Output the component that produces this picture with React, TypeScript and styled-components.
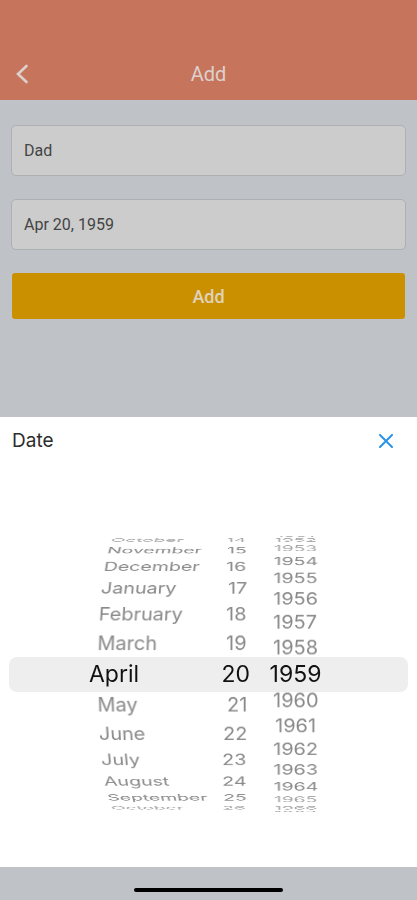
import React, { useState } from "react";
import styled, { createGlobalStyle } from "styled-components";

const GlobalStyle = createGlobalStyle`
  *, *::before, *::after { box-sizing: border-box; }
  body { margin: 0; background: #bfc3c8; }
  button, input { font: inherit; }
`;

const Screen = styled.div`
  display: flex;
  flex-direction: column;
  min-height: 100vh;
  background: #bfc3c8;
  font-family: Roboto, "Liberation Sans", sans-serif;
`;

const Header = styled.header`
  display: grid;
  grid-template-columns: 44px 1fr 44px;
  align-items: center;
  padding-top: 48px;
  height: 100px;
  background: #c7745c;
  color: #dcd1cd;
`;

const Title = styled.h1`
  margin: 0;
  font-size: 20px;
  line-height: 24px;
  font-weight: 400;
  text-align: center;
`;

const IconButton = styled.button`
  display: flex;
  align-items: center;
  justify-content: center;
  width: 44px;
  height: 44px;
  padding: 0;
  border: 0;
  background: none;
  color: inherit;
  cursor: pointer;
`;

const Form = styled.form`
  display: flex;
  flex: 1;
  flex-direction: column;
  gap: 23px;
  padding: 25px 11px;
`;

const Field = styled.input`
  width: 100%;
  height: 51px;
  padding: 0 12px;
  border: 1px solid #adb0b3;
  border-radius: 5px;
  outline: 0;
  background: #cccccc;
  color: #444444;
  font-size: 16px;
`;

const SubmitButton = styled.button`
  height: 46px;
  margin: 0 1px;
  border: 0;
  border-radius: 3px;
  background: #cb9000;
  color: #dfd2bd;
  font-size: 18px;
  font-weight: 500;
  cursor: pointer;
`;

const Sheet = styled.section`
  background: #ffffff;
  font-family: Inter, "Liberation Sans", sans-serif;
`;

const SheetHeader = styled.header`
  display: flex;
  align-items: center;
  justify-content: space-between;
  height: 48px;
  margin-bottom: 16px;
  padding: 0 9px 0 12px;
  color: #2b93e8;
`;

const SheetTitle = styled.h2`
  margin: 0;
  color: #2c2c2c;
  font-size: 19px;
  line-height: 24px;
  font-weight: 400;
`;

const Picker = styled.div`
  display: grid;
  grid-template-rows: 386px;
  align-items: center;
  padding: 0 9px;
`;

const SelectionBand = styled.div`
  grid-area: 1 / 1;
  height: 35px;
  border-radius: 8px;
  background: #eeeeee;
`;

const Columns = styled.div`
  grid-area: 1 / 1;
  display: grid;
  grid-template-columns: 131px 43px 91px;
  justify-content: center;
`;

type Align = "start" | "end" | "center";

const Column = styled.ul<{ $align: Align; $origin: string }>`
  display: grid;
  align-items: center;
  justify-items: ${(p) => p.$align};
  margin: 0;
  padding: 0;
  padding-left: ${(p) => (p.$align === "start" ? "13px" : "0")};
  list-style: none;
  perspective: 2000px;
  perspective-origin: ${(p) => p.$origin} 50%;
`;

const RADIUS = 148;

const Slot = styled.li<{ $angle: number; $inset: string }>`
  grid-area: 1 / 1;
  padding: ${(p) => (p.$angle === 0 ? "0" : p.$inset)};
  opacity: ${(p) => (Math.abs(p.$angle) > 60 ? 0.75 : 1)};
  transform: translateZ(${-RADIUS}px) rotateX(${(p) => -p.$angle}deg)
    translateZ(${RADIUS}px);
`;

const Option = styled.button<{ $selected: boolean }>`
  display: block;
  padding: 0;
  border: 0;
  background: none;
  color: ${(p) => (p.$selected ? "#111111" : "#8a8a8a")};
  font-size: ${(p) => (p.$selected ? 23 : 20)}px;
  line-height: 30px;
  white-space: nowrap;
  cursor: pointer;
`;

const HomeArea = styled.footer`
  display: flex;
  align-items: center;
  justify-content: center;
  height: 33px;
  padding-top: 13px;
`;

const HomeBar = styled.div`
  width: 149px;
  height: 4px;
  border-radius: 2px;
  background: #000000;
`;

const MONTHS = [
  "January", "February", "March", "April", "May", "June",
  "July", "August", "September", "October", "November", "December",
];

const wrap = (n: number, size: number) => ((n % size) + size) % size;

interface WheelProps {
  label: string;
  value: number;
  onChange: (value: number) => void;
  text: (value: number) => string;
  reach: number;
  step: number;
  align: Align;
  origin: string;
  inset: string;
}

function Wheel({ label, value, onChange, text, reach, step, align, origin, inset }: WheelProps) {
  const offsets = Array.from({ length: reach * 2 + 1 }, (_, i) => i - reach);
  return (
    <Column aria-label={label} $align={align} $origin={origin}>
      {offsets.map((k) => (
        <Slot key={value + k} $angle={k * step} $inset={inset}>
          <Option
            type="button"
            aria-pressed={k === 0}
            $selected={k === 0}
            onClick={() => onChange(value + k)}
          >
            {text(value + k)}
          </Option>
        </Slot>
      ))}
    </Column>
  );
}

export default function App() {
  const [name, setName] = useState("Dad");
  const [month, setMonth] = useState(3);
  const [day, setDay] = useState(19);
  const [year, setYear] = useState(1959);
  const [open, setOpen] = useState(true);

  const monthName = (m: number) => MONTHS[wrap(m, 12)];
  const dayNumber = (d: number) => String(wrap(d, 31) + 1);

  return (
    <Screen>
      <GlobalStyle />
      <Header>
        <IconButton type="button" aria-label="Back">
          <svg width="14" height="20" viewBox="0 0 14 20" fill="none" stroke="currentColor" strokeWidth="2.6" strokeLinecap="round" strokeLinejoin="miter">
            <path d="M11.5 2 3 10l8.500 8" />
          </svg>
        </IconButton>
        <Title>Add</Title>
      </Header>
      <Form onSubmit={(e) => e.preventDefault()}>
        <Field aria-label="Name" value={name} onChange={(e) => setName(e.target.value)} />
        <Field
          aria-label="Date"
          readOnly
          value={`${monthName(month).slice(0, 3)} ${dayNumber(day)}, ${year}`}
          onClick={() => setOpen(true)}
        />
        <SubmitButton type="submit">Add</SubmitButton>
      </Form>
      {open && (
        <Sheet aria-label="Date picker">
          <SheetHeader>
            <SheetTitle>Date</SheetTitle>
            <IconButton type="button" aria-label="Close" onClick={() => setOpen(false)}>
              <svg width="14" height="14" viewBox="0 0 14 14" fill="none" stroke="currentColor" strokeWidth="2" strokeLinecap="round">
                <path d="M1 1l12 12M13 1 1 13" />
              </svg>
            </IconButton>
          </SheetHeader>
          <Picker>
            <SelectionBand />
            <Columns>
              <Wheel label="Month" value={month} onChange={setMonth} text={monthName} reach={7} step={12} align="start" origin="310px" inset="0 0 0 8px" />
              <Wheel label="Day" value={day} onChange={setDay} text={dayNumber} reach={7} step={12} align="end" origin="50%" inset="0 3px 0 0" />
              <Wheel label="Year" value={year} onChange={setYear} text={String} reach={8} step={10.3} align="center" origin="50%" inset="0" />
            </Columns>
          </Picker>
        </Sheet>
      )}
      <HomeArea>
        <HomeBar />
      </HomeArea>
    </Screen>
  );
}
